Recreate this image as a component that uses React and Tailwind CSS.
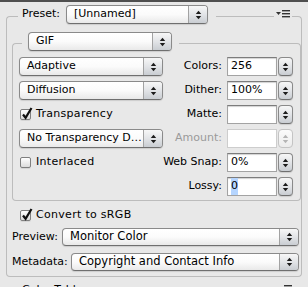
import React from 'react';

const Arrows = ({ disabled }) => {
  const c = disabled ? '#b4b4b4' : '#1c1c1c';
  return (
    <svg width="7" height="10" viewBox="0 0 7 10">
      <path d="M3.5 0.8 L6.2 4 L0.8 4 Z" fill={c} />
      <path d="M0.8 6 L6.2 6 L3.5 9.2 Z" fill={c} />
    </svg>
  );
};

const Popup = ({ label, className }) => (
  <div
    className={`flex rounded-[4px] border border-[#8a8a8a] border-b-[#6f6f6f] bg-gradient-to-b from-white via-[#fbfbfb] to-[#e9e9e9] shadow-[0_1px_1px_rgba(0,0,0,0.12)] ${className}`}
  >
    <div className="flex-1 min-w-0 pl-[7px] flex items-center whitespace-nowrap overflow-hidden">{label}</div>
    <div className="w-[19px] shrink-0 flex items-center justify-center border-l border-[#a2a2a2] rounded-r-[3px] bg-gradient-to-b from-[#f7f7f7] via-[#e2e4e7] to-[#c9cdd2]">
      <Arrows />
    </div>
  </div>
);

const Stepper = ({ disabled }) => (
  <div
    className={`w-[15px] h-[19px] rounded-[4px] border flex items-center justify-center bg-gradient-to-b ${
      disabled
        ? 'border-[#c4c4c4] from-[#fbfbfb] to-[#ececec]'
        : 'border-[#8a8a8a] border-b-[#6f6f6f] from-[#f7f7f7] via-[#e2e4e7] to-[#c9cdd2] shadow-[0_1px_1px_rgba(0,0,0,0.12)]'
    }`}
  >
    <Arrows disabled={disabled} />
  </div>
);

const Field = ({ label, value, disabled, selected }) => (
  <div className="flex items-center">
    <div className={`w-[59px] text-right whitespace-nowrap ${disabled ? 'text-[#9a9a9a]' : ''}`}>{label}</div>
    <div
      className={`ml-[5px] w-[50px] h-[19px] bg-white border flex items-center pl-[3px] ${
        disabled
          ? 'border-[#cdcdcd]'
          : 'border-[#a3a3a3] border-t-[#7c7c7c] shadow-[inset_0_1px_1px_rgba(0,0,0,0.18)]'
      }`}
    >
      {selected ? <span className="bg-[#b5d5ff]">{value}</span> : value}
    </div>
    <div className="ml-[1px]">
      <Stepper disabled={disabled} />
    </div>
  </div>
);

const Check = ({ checked, label }) => (
  <div className="flex items-center h-[19px] pl-[1px]">
    <div className="relative w-[11px] h-[11px] rounded-[2px] border border-[#7f7f7f] bg-gradient-to-b from-white to-[#dcdcdc] shadow-[0_1px_0_rgba(0,0,0,0.08)]">
      {checked && (
        <svg className="absolute -top-[3px] left-[0px]" width="12" height="13" viewBox="0 0 12 13">
          <path d="M2 7.5 L4.6 10.8 L10.5 1" stroke="#111" strokeWidth="2.2" fill="none" />
        </svg>
      )}
    </div>
    <span className="ml-[5px] tracking-[0.3px]">{label}</span>
  </div>
);

const MenuIcon = () => (
  <svg width="14" height="8" viewBox="0 0 14 8">
    <path d="M0 2 L5 2 L2.5 5 Z" fill="#333" />
    <rect x="6" y="0" width="8" height="1.4" fill="#333" />
    <rect x="6" y="3" width="8" height="1.4" fill="#333" />
    <rect x="6" y="6" width="8" height="1.4" fill="#333" />
  </svg>
);

export default function App() {
  const rows = [
    { left: <Popup label="Adaptive" className="w-[144px] h-[19px]" />, right: <Field label="Colors:" value="256" /> },
    { left: <Popup label="Diffusion" className="w-[144px] h-[19px]" />, right: <Field label="Dither:" value="100%" /> },
    { left: <Check checked label="Transparency" />, right: <Field label="Matte:" value="" /> },
    { left: <Popup label="No Transparency D…" className="w-[144px] h-[19px]" />, right: <Field label="Amount:" value="" disabled /> },
    { left: <Check label="Interlaced" />, right: <Field label="Web Snap:" value="0%" /> },
    { left: null, right: <Field label="Lossy:" value="0" selected /> }
  ];

  return (
    <div className="w-[308px] h-[287px] overflow-hidden bg-[#e8e8e8] text-black text-[11px] font-['DejaVu_Sans',sans-serif]">
      <div className="h-[2px] bg-[#4f4f4f]" />

      {/* Preset header */}
      <div className="mt-[3px] flex h-[19px] pl-[6px] pr-[6px]">
        <div className="self-end w-[12px] h-[8px] border-t border-l border-[#bcbcbc] rounded-tl-[4px]" />
        <div className="w-[48px] pl-[4px] flex items-center">Preset:</div>
        <Popup label="[Unnamed]" className="w-[142px] h-[19px]" />
        <div className="ml-[8px] flex-1 self-end h-[8px] border-t border-[#bcbcbc]" />
        <div className="flex items-center px-[2px] -mt-[1px]">
          <MenuIcon />
        </div>
        <div className="self-end w-[10px] h-[8px] border-t border-r border-[#bcbcbc] rounded-tr-[4px]" />
      </div>

      {/* Outer group body */}
      <div className="ml-[6px] w-[296px] border-l border-r border-b border-[#bcbcbc] rounded-b-[4px] pl-[5px] pb-[5px] pt-[8px]">
        {/* GIF header */}
        <div className="flex h-[19px]">
          <div className="self-end w-[10px] h-[8px] border-t border-l border-[#bcbcbc] rounded-tl-[4px]" />
          <Popup label="GIF" className="ml-[6px] w-[144px] h-[19px]" />
          <div className="ml-[7px] flex-1 self-end h-[8px] border-t border-r border-[#bcbcbc] rounded-tr-[4px]" />
        </div>
        <div className="border-l border-r border-b border-[#bcbcbc] rounded-b-[4px] pl-[6px] pt-[6px] pb-[4px] flex flex-col gap-[5px]">
          {rows.map((r, i) => (
            <div key={i} className="flex items-center h-[19px]">
              <div className="w-[144px]">{r.left}</div>
              {r.right}
            </div>
          ))}
        </div>

        <div className="mt-[5px] pl-[7px]">
          <Check checked label="Convert to sRGB" />
        </div>
        <div className="mt-[3px] flex items-center h-[18px] pr-[2px]">
          <div className="w-[50px] shrink-0">Preview:</div>
          <Popup label="Monitor Color" className="flex-1 h-[18px] text-[11.5px]" />
        </div>
        <div className="mt-[7px] flex items-center h-[18px] pr-[2px]">
          <div className="w-[59px] shrink-0">Metadata:</div>
          <Popup label="Copyright and Contact Info" className="flex-1 h-[18px] text-[11.5px]" />
        </div>
      </div>

      <div className="mt-[5px] flex items-start pl-[22px] pr-[16px]">
        <span>Color Table</span>
        <div className="ml-auto mt-[3px]">
          <MenuIcon />
        </div>
      </div>
    </div>
  );
}
